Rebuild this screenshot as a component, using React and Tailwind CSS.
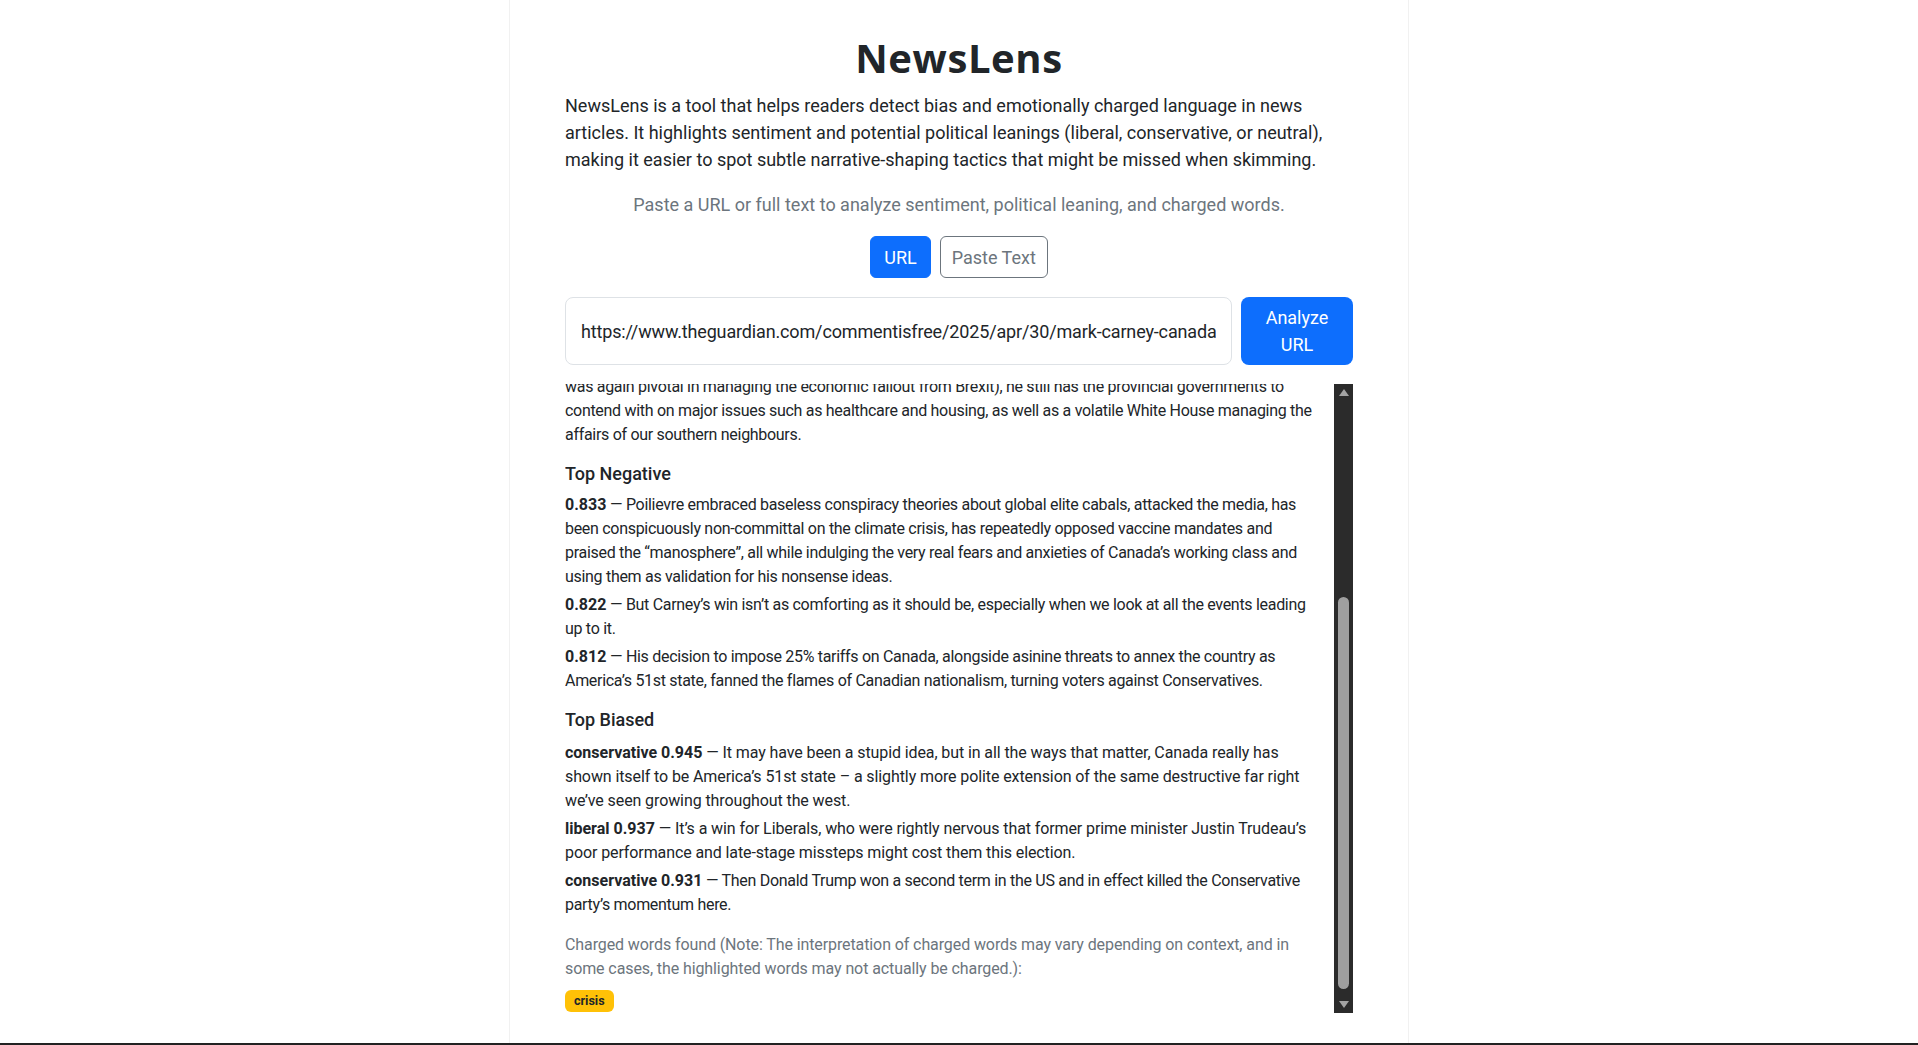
import React from 'react';

const intro =
    'NewsLens is a tool that helps readers detect bias and emotionally charged language in news articles. It highlights sentiment and potential political leanings (liberal, conservative, or neutral), making it easier to spot subtle narrative-shaping tactics that might be missed when skimming.';

const topNegative = [
    {
        score: '0.833',
        text: 'Poilievre embraced baseless conspiracy theories about global elite cabals, attacked the media, has been conspicuously non-committal on the climate crisis, has repeatedly opposed vaccine mandates and praised the \u201cmanosphere\u201d, all while indulging the very real fears and anxieties of Canada\u2019s working class and using them as validation for his nonsense ideas.',
        tight: true,
    },
    {
        score: '0.822',
        text: 'But Carney\u2019s win isn\u2019t as comforting as it should be, especially when we look at all the events leading up to it.',
        tight: true,
    },
    {
        score: '0.812',
        text: 'His decision to impose 25% tariffs on Canada, alongside asinine threats to annex the country as America\u2019s 51st state, fanned the flames of Canadian nationalism, turning voters against Conservatives.',
        tight: true,
    },
];

const topBiased = [
    {
        score: 'conservative 0.945',
        text: 'It may have been a stupid idea, but in all the ways that matter, Canada really has shown itself to be America\u2019s 51st state \u2013 a slightly more polite extension of the same destructive far right we\u2019ve seen growing throughout the west.',
    },
    {
        score: 'liberal 0.937',
        text: 'It\u2019s a win for Liberals, who were rightly nervous that former prime minister Justin Trudeau\u2019s poor performance and late-stage missteps might cost them this election.',
    },
    {
        score: 'conservative 0.931',
        text: 'Then Donald Trump won a second term in the US and in effect killed the Conservative party\u2019s momentum here.',
        tight: true,
    },
];

const Scrollbar = () => (
    <div className="flex w-[19px] shrink-0 flex-col items-center bg-[#2b2b2b]">
        <div className="flex h-[17px] items-center justify-center">
            <svg width="10" height="7" viewBox="0 0 10 7">
                <path d="M5 0L10 7H0z" fill="#a3a3a3" />
            </svg>
        </div>
        <div className="flex w-full flex-1 flex-col items-center justify-end pb-[7px]">
            <div className="h-[392px] w-[11px] rounded-full bg-[#9f9f9f]"></div>
        </div>
        <div className="flex h-[17px] items-center justify-center">
            <svg width="10" height="7" viewBox="0 0 10 7">
                <path d="M0 0H10L5 7z" fill="#a3a3a3" />
            </svg>
        </div>
    </div>
);

const ResultItem = ({ score, text, tight }) => (
    <p className={tight ? 'mb-1 tracking-[-0.3px]' : 'mb-1 tracking-[-0.1px]'}>
        <span className="font-bold tracking-normal">{score}</span> {'\u2014'} {text}
    </p>
);

export default function App() {
    return (
        <div
            className="flex min-h-[1045px] flex-col bg-white text-[#212529]"
            style={{ fontFamily: 'Roboto, "Segoe UI", "Liberation Sans", sans-serif' }}
        >
            <div className="mx-auto flex w-[900px] flex-1 flex-col border-x border-[#f1f1f1] px-[55px] pt-[34px]">
                {/* Header */}
                <h1
                    className="mb-[10px] text-center text-[40px] font-bold leading-[48px] tracking-[0.6px]"
                    style={{ fontFamily: '"Open Sans", Roboto, sans-serif' }}
                >
                    NewsLens
                </h1>
                <p className="text-[18px] leading-[27px]">{intro}</p>
                <p className="mt-[18px] text-center text-[18px] leading-[27px] text-[#6c757d]">
                    Paste a URL or full text to analyze sentiment, political leaning, and charged words.
                </p>

                {/* Mode toggle */}
                <div className="mt-[18px] flex justify-center gap-[9px]">
                    <button className="rounded-[6px] border border-[#0d6efd] bg-[#0d6efd] px-[13px] py-[6.5px] text-[18px] leading-[27px] text-white">
                        URL
                    </button>
                    <button className="rounded-[6px] border border-[#6c757d] bg-white px-[11px] py-[6.5px] text-[18px] leading-[27px] text-[#6c757d]">
                        Paste Text
                    </button>
                </div>

                {/* URL input */}
                <div className="mt-[19px] flex gap-[9px]">
                    <input
                        readOnly
                        value="https://www.theguardian.com/commentisfree/2025/apr/30/mark-carney-canada-election-pierre-poilievre"
                        className="min-w-0 flex-1 rounded-[8px] border border-[#dee2e6] bg-white px-[15px] text-[18px] tracking-[-0.15px] text-[#212529] outline-none"
                    />
                    <button className="w-[112px] rounded-[8px] bg-[#0d6efd] py-[7px] text-[18px] leading-[27px] text-white">
                        Analyze
                        <br />
                        URL
                    </button>
                </div>

                {/* Results */}
                <div className="mt-[19px] flex h-[629px] overflow-hidden">
                    <div className="flex min-w-0 flex-1 flex-col justify-end overflow-hidden pr-[17px] pb-[1px] text-[16px] leading-[24px]">
                        <div>
                            <p className="mb-4 tracking-[-0.3px]">
                                was again pivotal in managing the economic fallout from Brexit), he still has the provincial governments to contend with on major issues such as healthcare and housing, as well as a volatile White House managing the affairs of our southern neighbours.
                            </p>

                            <h6 className="mb-2 text-[18px] font-medium leading-[21.6px]">Top Negative</h6>
                            {topNegative.map((item) => (
                                <ResultItem key={item.score} {...item} />
                            ))}

                            <h6 className="mt-[16px] mb-[10px] text-[18px] font-medium leading-[21.6px]">Top Biased</h6>
                            {topBiased.map((item) => (
                                <ResultItem key={item.score} {...item} />
                            ))}

                            <p className="mt-4 tracking-[-0.1px] text-[#6c757d]">
                                Charged words found (Note: The interpretation of charged words may vary depending on context, and in some cases, the highlighted words may not actually be charged.):
                            </p>
                            <div className="mt-[9px] flex flex-wrap gap-1">
                                <span className="rounded-[6px] bg-[#ffc107] px-[9px] py-[5px] text-[12.5px] font-bold leading-none text-[#212529]">
                                    crisis
                                </span>
                            </div>
                        </div>
                    </div>
                    <Scrollbar />
                </div>
            </div>
            <div className="h-[2px] bg-[#222]"></div>
        </div>
    );
}
